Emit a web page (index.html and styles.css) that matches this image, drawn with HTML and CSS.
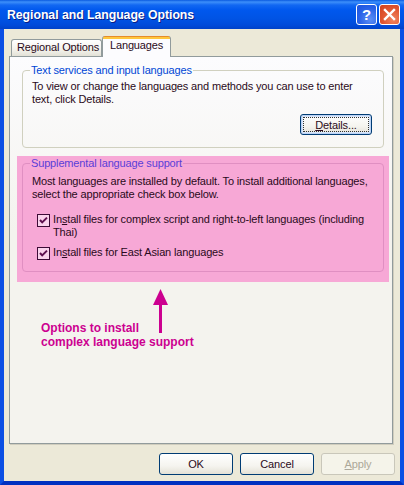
FILE: index.html
```html
<!DOCTYPE html>
<html>
<head>
<meta charset="utf-8">
<link rel="stylesheet" href="styles.css">
</head>
<body>
<div class="window">
  <div class="titlebar">
    <span class="title">Regional and Language Options</span>
    <div class="tb-buttons">
      <div class="tb-btn help">?</div>
      <div class="tb-btn close">
        <svg width="13" height="13" viewBox="0 0 13 13"><path d="M2 2 L11 11 M11 2 L2 11" stroke="#fff" stroke-width="2.4" stroke-linecap="square"/></svg>
      </div>
    </div>
  </div>
  <div class="client">
    <div class="tabs">
      <div class="tab">Regional Options</div>
      <div class="tab active">Languages</div>
    </div>
    <div class="panel">
      <fieldset class="group">
        <legend>Text services and input languages</legend>
        <p class="desc">To view or change the languages and methods you can use to enter<br>text, click Details.</p>
        <div class="actions">
          <button class="btn btn-details"><span class="focus"><u>D</u>etails...</span></button>
        </div>
      </fieldset>
      <div class="highlight">
        <fieldset class="group group-pink">
          <legend>Supplemental language support</legend>
          <p class="desc desc-pink">Most languages are installed by default. To install additional languages,<br>select the appropriate check box below.</p>
          <div class="check-row first">
            <svg class="checkbox" width="13" height="13" viewBox="0 0 13 13"><rect x="0.5" y="0.5" width="12" height="12" fill="#FAD3EC" stroke="#3C0B36"/><path d="M3 6 L5.2 8.4 L10 3.6" fill="none" stroke="#5E0F4E" stroke-width="2"/></svg>
            <span class="label">In<u>s</u>tall files for complex script and right-to-left languages (including<br>Thai)</span>
          </div>
          <div class="check-row">
            <svg class="checkbox" width="13" height="13" viewBox="0 0 13 13"><rect x="0.5" y="0.5" width="12" height="12" fill="#FAD3EC" stroke="#3C0B36"/><path d="M3 6 L5.2 8.4 L10 3.6" fill="none" stroke="#5E0F4E" stroke-width="2"/></svg>
            <span class="label">In<u>s</u>tall files for East Asian languages</span>
          </div>
        </fieldset>
      </div>
      <div class="annotation">
        <svg class="arrow" width="15" height="44" viewBox="0 0 15 44"><path d="M7.5 0 L15 16 L0 16 Z" fill="#CC0090"/><rect x="6" y="15" width="3" height="29" fill="#CC0090"/></svg>
        <div class="note">Options to install<br>complex language support</div>
      </div>
    </div>
    <div class="buttons">
      <button class="btn btn-dlg">OK</button>
      <button class="btn btn-dlg">Cancel</button>
      <button class="btn btn-dlg disabled"><u>A</u>pply</button>
    </div>
  </div>
</div>
</body>
</html>
```

FILE: styles.css
```css
* { box-sizing: border-box; }
html, body { margin: 0; padding: 0; }
body {
  width: 404px;
  height: 485px;
  overflow: hidden;
  font-family: "Liberation Sans", Arial, sans-serif;
  font-size: 11px;
  letter-spacing: -0.15px;
  color: #2a0a20;
  background: #ffffff;
}
.window {
  width: 404px;
  height: 485px;
  display: flex;
  flex-direction: column;
}
.titlebar {
  flex: none;
  height: 29px;
  display: flex;
  align-items: center;
  padding: 0 4px 0 7px;
  background: linear-gradient(#0A5AE0 0, #3D8FFA 2px, #1268F2 5px, #0058EE 10px, #0054E5 18px, #004BDA 25px, #0042C8 29px);
}
.title {
  flex: 1;
  color: #ffffff;
  font-weight: bold;
  font-size: 12.3px;
  letter-spacing: -0.05px;
  text-shadow: 1px 1px 0 #0A1E86;
  padding-top: 1px;
}
.tb-buttons { display: flex; gap: 2px; }
.tb-btn {
  width: 21px;
  height: 21px;
  border: 1px solid #ffffff;
  border-radius: 3px;
  display: flex;
  align-items: center;
  justify-content: center;
}
.help {
  background: radial-gradient(circle at 70% 75%, #5C8FF5 0, #2A63E8 55%, #1C52DC 100%);
  color: #ffffff;
  font-weight: bold;
  font-size: 15px;
  line-height: 15px;
}
.close {
  background: radial-gradient(circle at 70% 75%, #F08560 0, #E05530 55%, #D0401E 100%);
}
.client {
  flex: 1;
  display: flex;
  flex-direction: column;
  align-items: flex-start;
  background: #ECE9D8;
  border-left: 4px solid #0B4FE4;
  border-right: 4px solid #0B4FE4;
  border-bottom: 4px solid #0030C0;
  padding: 7px 5px 0 5px;
}
.tabs {
  display: flex;
  align-items: flex-end;
  height: 20px;
  padding-left: 2px;
}
.tab {
  height: 17px;
  width: 91px;
  border: 1px solid #919B9C;
  border-bottom: 0;
  border-radius: 3px 3px 0 0;
  background: linear-gradient(#FFFFFF, #F3F2EC 60%, #E3E1D6);
  padding: 0 0 0 5px;
  line-height: 15px;
  white-space: nowrap;
}
.tab.active {
  position: relative;
  z-index: 1;
  height: 21px;
  width: 69px;
  margin-bottom: -1px;
  border-top: 0;
  padding: 3px 0 0 7px;
  line-height: 13px;
  background: linear-gradient(#E68B2C 0, #E68B2C 1px, #FFC73C 1px, #FFC73C 3px, #FCFCFE 3px);
}
.panel {
  width: 384px;
  height: 388px;
  border: 1px solid #919B9C;
  box-shadow: 1px 1px 0 #D0CDBE;
  background: linear-gradient(#FCFCFE, #F4F3EE 45%, #F4F3EE);
  padding: 7px 3px 0 7px;
}
.group {
  margin: 0 5px;
  border: 1px solid #D0D0BF;
  border-radius: 4px;
  padding: 0 11px 12px 9px;
  min-width: 0;
}
.group legend {
  color: #0046D5;
  padding: 0 1px;
  margin-left: -2px;
  line-height: 13px;
}
.desc {
  margin: 3px 0 0;
  line-height: 13px;
  white-space: nowrap;
}
.actions {
  display: flex;
  justify-content: flex-end;
  margin-top: 8px;
}
.btn {
  font-family: "Liberation Sans", Arial, sans-serif;
  font-size: 11px;
  letter-spacing: -0.12px;
  color: #2a0a20;
  border: 1px solid #003C74;
  border-radius: 3px;
  background: linear-gradient(#FFFFFF, #F5F4EF 60%, #E4E1D6);
  display: flex;
  align-items: center;
  justify-content: center;
  padding: 0;
  margin: 0;
}
.btn-details {
  width: 72px;
  height: 21px;
  box-shadow: inset 0 0 0 1px #BCD3F5, inset 0 0 0 2px #D8E6FA;
  padding: 2px;
}
.focus {
  display: flex;
  align-items: center;
  justify-content: center;
  width: 100%;
  height: 100%;
  border: 1px dotted #333333;
}
.highlight {
  margin-top: 8px;
  background: #F7A8D6;
  padding: 1px 5px 10px;
}
.group-pink {
  margin: 0;
  border-color: #E08FC2;
  padding-bottom: 11px;
}
.group-pink legend { color: #5A3ED8; }
.desc-pink { margin-top: 5px; }
.check-row {
  display: flex;
  align-items: flex-start;
  margin-top: 7px;
}
.check-row.first { margin-top: 12px; }
.checkbox {
  flex: none;
  margin: 1px 0 0 5px;
}
.label {
  margin-left: 3px;
  line-height: 13px;
  white-space: nowrap;
}
.annotation {
  position: relative;
  padding: 39px 0 0 24px;
}
.arrow {
  position: absolute;
  left: 136px;
  top: 7px;
}
.note {
  color: #CC0090;
  font-weight: bold;
  font-size: 12px;
  letter-spacing: 0;
  line-height: 14px;
}
.buttons {
  align-self: flex-end;
  display: flex;
  gap: 7px;
  margin-top: 9px;
}
.btn-dlg {
  width: 74px;
  height: 22px;
}
.btn-dlg.disabled {
  border-color: #C9C7BA;
  color: #ACA899;
  background: #F5F4EA;
}
```
